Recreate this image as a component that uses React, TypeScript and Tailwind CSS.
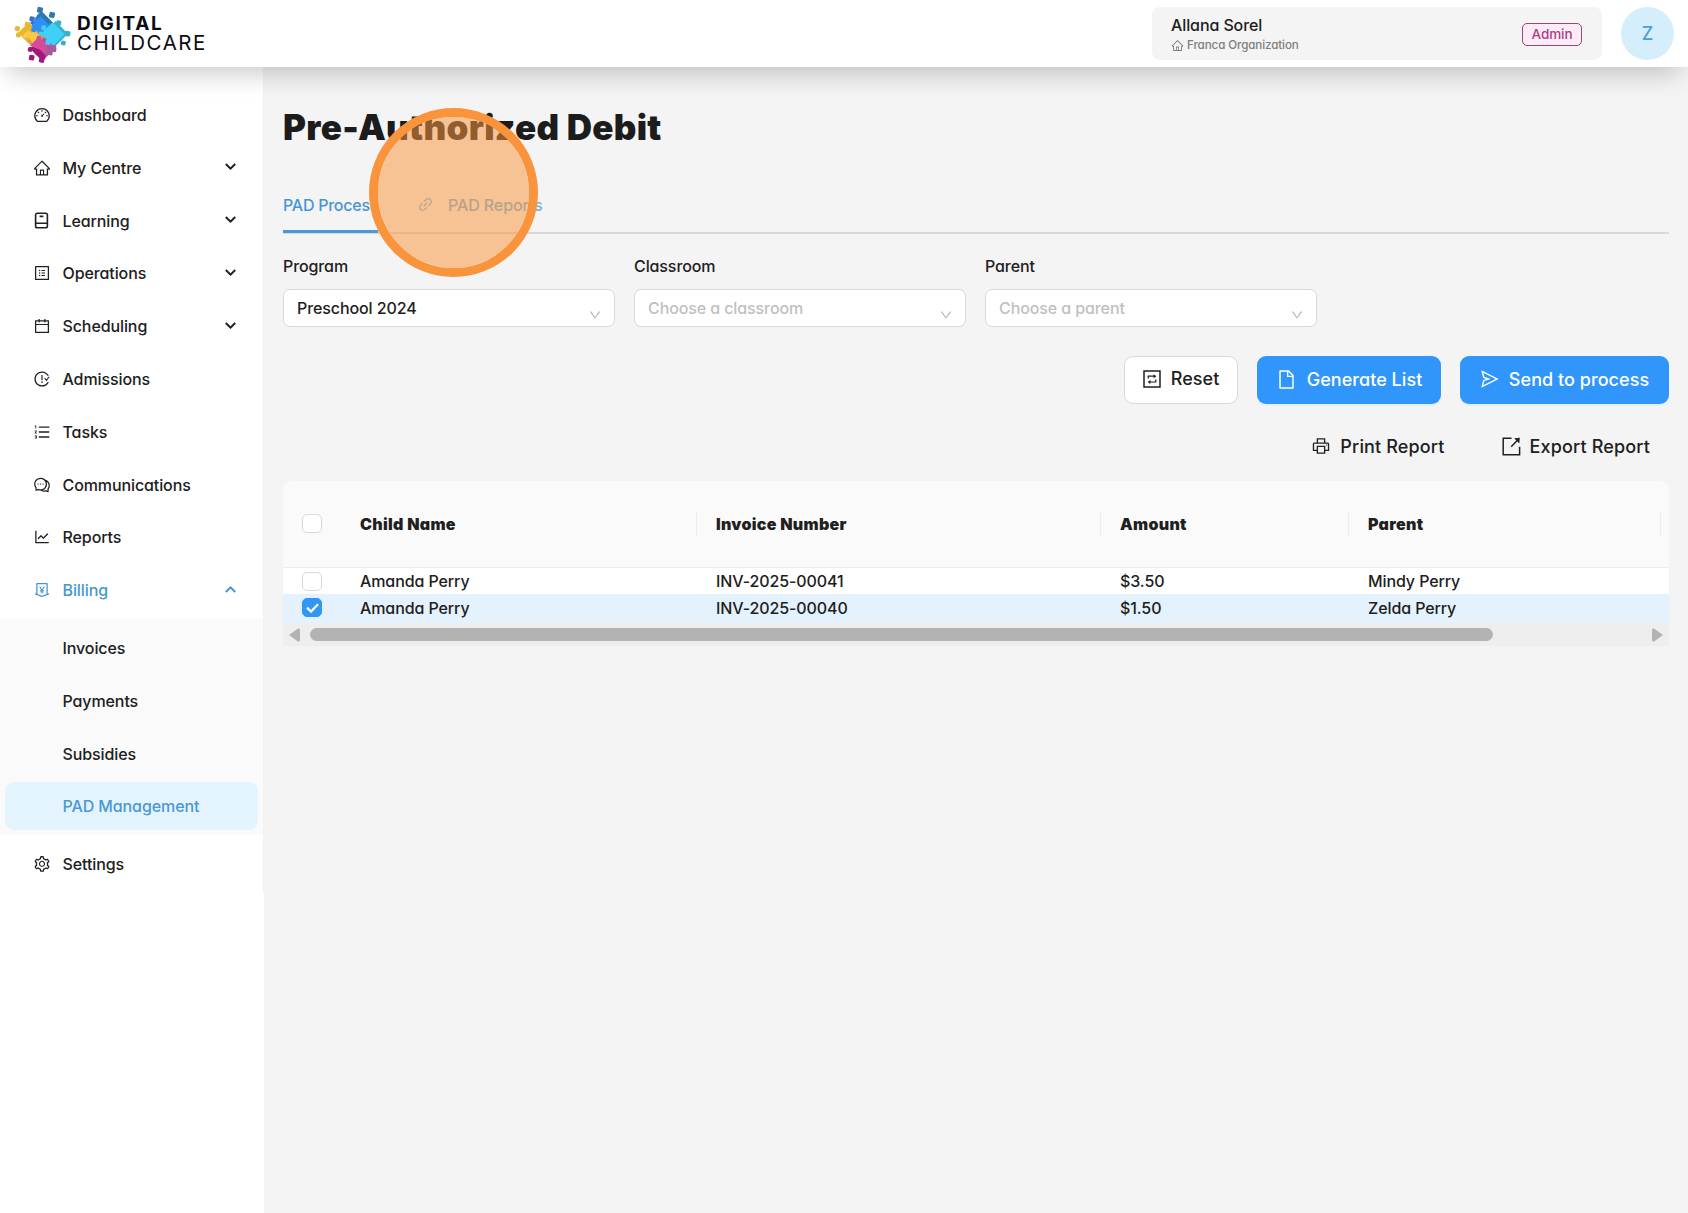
import React from 'react';
import {
  AiOutlineCalendar,
  AiOutlineComment,
  AiOutlineDashboard,
  AiOutlineDown,
  AiOutlineFile,
  AiOutlineHome,
  AiOutlineIssuesClose,
  AiOutlineLineChart,
  AiOutlineLink,
  AiOutlineMoneyCollect,
  AiOutlineOrderedList,
  AiOutlinePrinter,
  AiOutlineProfile,
  AiOutlineSend,
  AiOutlineSetting,
} from 'react-icons/ai';

const BookIcon = () => (
  <svg className="h-[17px] w-[17px]" viewBox="0 0 17 17" fill="none" stroke="currentColor" strokeWidth="1.6">
    <rect x="2.6" y="1.2" width="11.8" height="14.6" rx="1.8" />
    <path d="M2.6 11.2h11.8M6.6 4.4h3.8" />
  </svg>
);

const ResetIcon = () => (
  <svg className="h-[18px] w-[18px]" viewBox="0 0 18 18" fill="none" stroke="currentColor" strokeWidth="1.5">
    <path d="M1 1h16v16H1z" />
    <path d="M5.200 8.600V6.200h6M12.800 9.400v2.600H6.800" strokeWidth="1.2" />
    <path d="M10.600 4.200v4l2.800-2zM7.400 10v4l-2.800-2z" fill="currentColor" stroke="none" />
  </svg>
);

const ExportIcon = () => (
  <svg className="h-[19px] w-[19px]" viewBox="0 0 19 19" fill="none" stroke="currentColor" strokeWidth="1.5">
    <path d="M9.5 1.2H1.2v16.6h16.4V9.8" />
    <path d="M9.2 9.8l6-6.2" />
    <path d="M12.2 1.3l5.6-.5-.5 5.7z" fill="currentColor" stroke="none" />
  </svg>
);

const Chevron = ({ up = false }: { up?: boolean }) => (
  <svg className="h-[7px] w-[11px]" viewBox="0 0 11 7" fill="none" stroke="currentColor" strokeWidth="2">
    <path d={up ? 'M.8 6l4.7-4.6L10.2 6' : 'M.8 1l4.7 4.6L10.2 1'} />
  </svg>
);

// puzzle tab, a small rounded square
const Knob = ({ x, y, s = 15 }: { x: number; y: number; s?: number }) => (
  <rect x={x - s / 2} y={y - s / 2} width={s} height={s} rx="4" transform={`rotate(12 ${x} ${y})`} />
);

const LogoMark = () => (
  <svg className="h-[66px] w-[70px]" viewBox="0 0 210 198">
    <g fill="#3c6fc4">
      <path d="M66 66l34-34 60 60-40 20z" />
      <Knob x={72} y={54} />
    </g>
    <g fill="#2b78b3">
      <path d="M86 44l14-14 58 58-16 14-44-44z" />
      <Knob x={96} y={27} s={17} />
      <Knob x={132} y={42} s={17} />
    </g>
    <g fill="#36b2cc">
      <path d="M142 60l38 38-44 44-30-30z" />
      <Knob x={152} y={66} />
      <Knob x={179} y={98} s={16} />
      <Knob x={166} y={126} s={14} />
    </g>
    <g fill="#e9b62f">
      <path d="M30 96l32-32 30 30-32 32z" />
      <Knob x={28} y={83} s={15} />
      <Knob x={58} y={70} s={15} />
      <Knob x={31} y={102} s={14} />
    </g>
    <path d="M58 122l34-34 24 24-40 30z" fill="#e59a4a" />
    <path d="M42 106l18-18 10 8 8-8 24 22-26 20-14-22-12 4z" fill="#fbc945" />
    <g fill="#a65a9e">
      <path d="M104 110h18l24 28-34 34-24-24z" />
      <Knob x={138} y={146} s={14} />
      <Knob x={127} y={156} s={14} />
    </g>
    <g fill="#a4177a">
      <path d="M62 138h50v34l-8 8-22-20z" />
      <Knob x={71} y={170} s={16} />
      <Knob x={101} y={177} s={16} />
      <Knob x={66} y={146} s={13} />
    </g>
    <g fill="#d84a9b">
      <path d="M66 134l26-26 26 26-6 28-16-16z" />
      <Knob x={93} y={112} s={14} />
      <Knob x={124} y={128} s={12} />
    </g>
    <g fill="#2f8ff5">
      <path d="M70 74l28-28 28 28-28 28z" />
      <Knob x={82} y={58} s={13} />
      <Knob x={77} y={86} s={14} />
    </g>
    <g fill="#3fd0f7">
      <path d="M98 98l36-34 36 36-34 34z" />
      <Knob x={107} y={80} s={14} />
      <Knob x={120} y={124} s={15} />
      <Knob x={98} y={98} s={12} />
    </g>
  </svg>
);

interface MenuItem {
  label: string;
  icon: React.ReactNode;
  expandable?: boolean;
}

const menu: MenuItem[] = [
  { label: 'Dashboard', icon: <AiOutlineDashboard /> },
  { label: 'My Centre', icon: <AiOutlineHome />, expandable: true },
  { label: 'Learning', icon: <BookIcon />, expandable: true },
  { label: 'Operations', icon: <AiOutlineProfile />, expandable: true },
  { label: 'Scheduling', icon: <AiOutlineCalendar />, expandable: true },
  { label: 'Admissions', icon: <AiOutlineIssuesClose /> },
  { label: 'Tasks', icon: <AiOutlineOrderedList /> },
  { label: 'Communications', icon: <AiOutlineComment /> },
  { label: 'Reports', icon: <AiOutlineLineChart /> },
];

const billingItems = ['Invoices', 'Payments', 'Subsidies', 'PAD Management'];

const MenuRow = ({ label, icon, expandable, active = false }: MenuItem & { active?: boolean }) => (
  <li className={`mb-[4.8px] flex h-12 items-center pl-[33px] pr-[27px] ${active ? 'text-[#4696d2]' : ''}`}>
    <span className="flex w-[29.500px] text-[18px]">{icon}</span>
    <span className="flex-1">{label}</span>
    {expandable && (
      <span className="-mt-0.5">
        <Chevron up={active} />
      </span>
    )}
  </li>
);

const Select = ({ label, value, placeholder }: { label: string; value?: string; placeholder?: string }) => (
  <div className="w-[332px]">
    <label className="block leading-6">{label}</label>
    <div className="mt-[11px] flex h-[38px] items-center justify-between rounded-[7px] border border-[#d9d9d9] bg-white pl-[13px] pr-[12px]">
      <span className={value ? '' : 'text-[#bfbfbf]'}>{value ?? placeholder}</span>
      <AiOutlineDown className="mt-3.5 text-[14px] text-[#b5b5b5]" />
    </div>
  </div>
);

const Checkbox = ({ checked = false }: { checked?: boolean }) => (
  <span
    className={`flex h-[19px] w-5 items-center justify-center rounded-[5px] border ${
      checked ? 'border-[#3196f5] bg-[#3196f5]' : 'border-[#d9d9d9] bg-white'
    }`}
  >
    {checked && (
      <svg className="h-[10px] w-[13px]" viewBox="0 0 13 10" fill="none" stroke="#fff" strokeWidth="2.2">
        <path d="M1 4.600l4 4L12 1.200" />
      </svg>
    )}
  </span>
);

const headers = ['Child Name', 'Invoice Number', 'Amount', 'Parent'];

const rows = [
  { child: 'Amanda Perry', invoice: 'INV-2025-00041', amount: '$3.50', parent: 'Mindy Perry', checked: false },
  { child: 'Amanda Perry', invoice: 'INV-2025-00040', amount: '$1.50', parent: 'Zelda Perry', checked: true },
];

const columns = 'grid grid-cols-[77px_356px_404px_248px_1fr] items-center';

export default function App() {
  return (
    <div className="flex h-[1213px] w-[1688px] flex-col overflow-hidden bg-[#f4f4f4] font-['Inter','Liberation_Sans',sans-serif] text-[16px] font-[550] tracking-[-0.1px] text-[#202020] [font-feature-settings:'cv11']">
      <header className="relative z-10 flex h-[67px] shrink-0 items-center bg-white pl-2 pr-[14px] shadow-[0_14px_26px_-8px_rgba(0,0,0,0.22)]">
        <LogoMark />
        <div className="-ml-px flex flex-col gap-px text-[#0c0c14]">
          <span className="text-[19px] font-bold leading-[17px] tracking-[1.7px]">DIGITAL</span>
          <span className="text-[20.5px] font-normal leading-[20px] tracking-[1.500px]">CHILDCARE</span>
        </div>
        <div className="ml-auto flex h-[53px] w-[450px] items-center justify-between rounded-lg bg-[#f4f4f4] pl-[19px] pr-5">
          <div className="pt-0.5">
            <div className="leading-5">Allana Sorel</div>
            <div className="mt-px flex items-center gap-[3px] text-[11.600px] leading-[18px] text-[#7e7e7e]">
              <AiOutlineHome className="text-[13px]" />
              Franca Organization
            </div>
          </div>
          <span className="mt-px flex h-[23px] w-[60px] items-center justify-center rounded-[5px] border border-[#a0447c] bg-[#fdebf6] text-[13.500px] text-[#a8418a]">
            Admin
          </span>
        </div>
        <div className="ml-[19px] flex size-[53px] items-center justify-center rounded-full bg-[#d4eefc] text-[18px] text-[#4a9fd4]">
          Z
        </div>
      </header>

      <div className="flex flex-1">
        <aside className="w-[264px] shrink-0 bg-white">
          <nav className="h-[826px] border-r border-[#f2f2f2] pt-6">
            <ul>
              {menu.map((item) => (
                <MenuRow key={item.label} {...item} />
              ))}
              <MenuRow label="Billing" icon={<AiOutlineMoneyCollect />} expandable active />
              <li className="bg-[#fafafa] pt-[5px]">
                <ul>
                  {billingItems.map((name) => (
                    <li
                      key={name}
                      className={`mx-[5px] flex h-12 items-center rounded-[9px] pl-[57.500px] ${
                        name === 'PAD Management' ? 'bg-[#e4f4ff] text-[#4a97d6]' : 'mb-[4.8px]'
                      }`}
                    >
                      {name}
                    </li>
                  ))}
                </ul>
                <div className="h-[4.800px]" />
              </li>
              <li className="h-[5px]" />
              <MenuRow label="Settings" icon={<AiOutlineSetting />} />
            </ul>
          </nav>
        </aside>

        <main className="flex-1 px-[19px]">
          <h1 className="pt-[38px] text-[35px] font-black leading-[45px] tracking-[0.3px] text-[#1c1c1c]">
            Pre-Authorized Debit
          </h1>

          <div className="relative mt-[27px] h-[57px] border-b-2 border-[#d9d9d9] text-[#4696d2]">
            <div className="flex h-full">
              <div className="h-[56px] w-[95px] whitespace-nowrap border-b-[3px] border-[#4b98d8] pt-4 tracking-[-0.25px]">
                PAD Process
              </div>
              <div className="flex items-start pl-[39px] pt-4 text-[#6cb2e2]">
                <AiOutlineLink className="mt-[3px] text-[17px]" />
                <span className="pl-[14px]">PAD Reports</span>
              </div>
            </div>
            {/* click highlight */}
            <div className="absolute left-[86px] top-[-69px] size-[169px] rounded-full border-[9px] border-[#fa943c] bg-[#fa963f]/53 bg-clip-padding" />
          </div>

          <div className="mt-5 flex gap-[19px]">
            <Select label="Program" value="Preschool 2024" />
            <Select label="Classroom" placeholder="Choose a classroom" />
            <Select label="Parent" placeholder="Choose a parent" />
          </div>

          <div className="mt-[29px] flex justify-end gap-[19px] text-[18px] tracking-[0.05px]">
            <button className="flex h-12 w-[114px] items-center justify-center gap-[10px] rounded-[9px] border border-[#d9d9d9] bg-white pb-[3px]">
              <ResetIcon />
              Reset
            </button>
            <button className="flex h-12 w-[184px] items-center justify-center gap-[10px] rounded-[9px] bg-[#3196fb] pb-[2px] text-white shadow-[0_2px_0_#e0effc]">
              <AiOutlineFile className="text-[21px]" />
              Generate List
            </button>
            <button className="flex h-12 w-[209px] items-center justify-center gap-[9px] rounded-[9px] bg-[#3196fb] pb-[2px] text-white shadow-[0_2px_0_#e0effc]">
              <AiOutlineSend className="text-[20px]" />
              Send to process
            </button>
          </div>

          <div className="mt-[19px] flex h-12 items-center justify-end gap-[57px] pb-[2px] pr-[19px] text-[18px] tracking-[0.15px]">
            <span className="flex items-center gap-[9px]">
              <AiOutlinePrinter className="text-[20px]" />
              Print Report
            </span>
            <span className="flex items-center gap-[9px]">
              <ExportIcon />
              Export Report
            </span>
          </div>

          <div className="mt-[10px] overflow-hidden rounded-t-[9px]">
            <div className={`${columns} h-[87px] border-b border-[#ececec] bg-[#fafafa] font-black tracking-[0.3px]`}>
              <div className="pb-px pl-[19px]">
                <Checkbox />
              </div>
              {headers.map((name) => (
                <div
                  key={name}
                  className="mr-[19px] flex h-[26px] items-center border-r border-[#ededed] last:mr-2"
                >
                  {name}
                </div>
              ))}
            </div>
            {rows.map((row) => (
              <div
                key={row.invoice}
                className={`${columns} ${row.checked ? 'h-[29px] bg-[#e4f2fd] pb-0.5' : 'h-[26px] bg-white'}`}
              >
                <div className="pl-[19px]">
                  <Checkbox checked={row.checked} />
                </div>
                <span>{row.child}</span>
                <span>{row.invoice}</span>
                <span>{row.amount}</span>
                <span>{row.parent}</span>
              </div>
            ))}
            <div className="flex h-[23px] items-center bg-[#eeeeee] px-[6px] text-[#b3b3b3]">
              <svg className="h-[14px] w-[11px]" viewBox="0 0 11 14" fill="currentColor">
                <path d="M0 7L9 .5Q11 0 11 2v10q0 2-2 1.500z" />
              </svg>
              <span className="ml-[10px] h-[13px] w-[1183px] rounded-full bg-[#b3b3b3]" />
              <svg className="ml-auto h-[14px] w-[11px]" viewBox="0 0 11 14" fill="currentColor">
                <path d="M11 7L2 .5Q0 0 0 2v10q0 2 2 1.500z" />
              </svg>
            </div>
          </div>
        </main>
      </div>
    </div>
  );
}
